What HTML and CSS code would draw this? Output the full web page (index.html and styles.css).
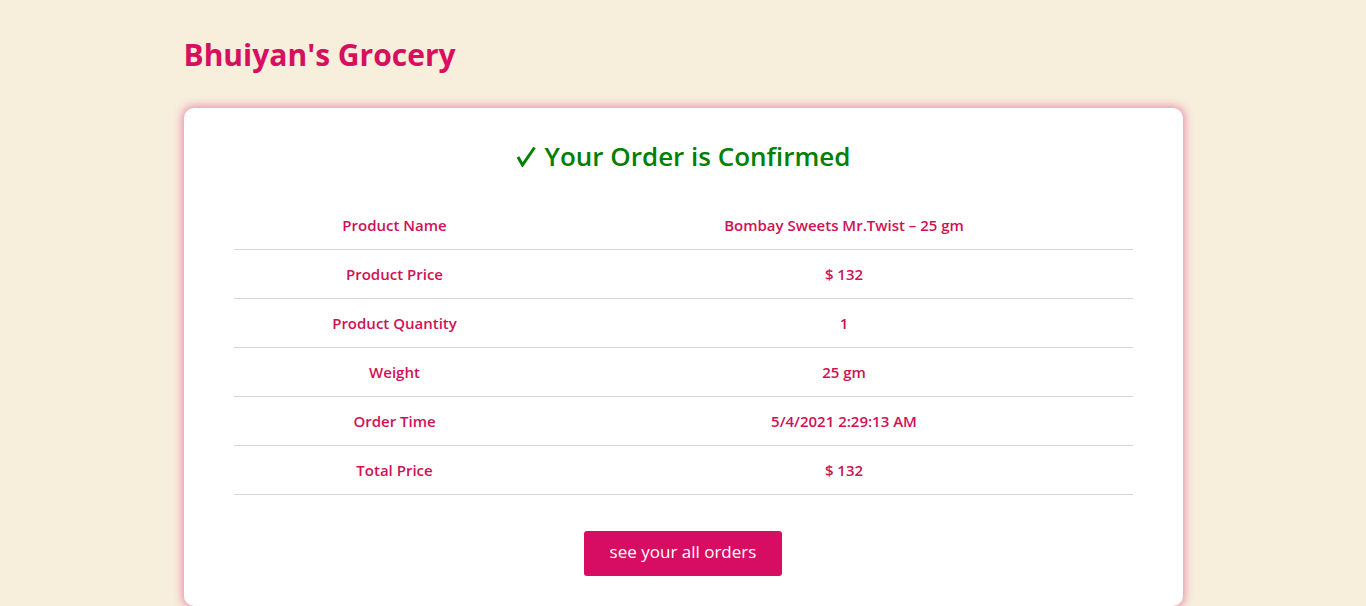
FILE: index.html
```html
<!DOCTYPE html>
<html lang="en">
<head>
<meta charset="utf-8">
<title>Bhuiyan's Grocery</title>
<link rel="stylesheet" href="styles.css">
</head>
<body>
<div class="container">
  <h1 class="brand">Bhuiyan's Grocery</h1>
  <div class="card">
    <h2 class="confirm"><svg class="tick" width="20" height="21" viewBox="0 0 20 21" aria-hidden="true"><path d="M2 11 L6.5 19 L18.5 1.5" fill="none" stroke="#008000" stroke-width="3" stroke-linejoin="miter"/></svg>Your Order is Confirmed</h2>
    <table class="order">
      <tbody>
        <tr><td>Product Name</td><td>Bombay Sweets Mr.Twist – 25 gm</td></tr>
        <tr><td>Product Price</td><td>$ 132</td></tr>
        <tr><td>Product Quantity</td><td>1</td></tr>
        <tr><td>Weight</td><td>25 gm</td></tr>
        <tr><td>Order Time</td><td>5/4/2021 2:29:13 AM</td></tr>
        <tr><td>Total Price</td><td>$ 132</td></tr>
      </tbody>
    </table>
    <div class="actions">
      <button class="btn">see your all orders</button>
    </div>
  </div>
</div>
</body>
</html>
```
FILE: styles.css
```css
html, body {
  margin: 0;
  padding: 0;
  background: #f7eedc;
  font-family: "Open Sans", "Noto Sans", sans-serif;
}
.container {
  width: 999px;
  margin: 0 auto;
  padding-top: 34px;
}
.brand {
  margin: 0 0 32px 0;
  font-size: 30px;
  line-height: 42px;
  font-weight: 700;
  color: #d6105f;
}
.card {
  background: #fff;
  border-radius: 10px;
  box-shadow: 0 0 8px 2px #ec8fae;
  padding: 30px 50px 30px 50px;
}
.confirm {
  margin: 0 0 27px 0;
  display: flex;
  justify-content: center;
  align-items: center;
  gap: 9px;
  font-size: 26px;
  line-height: 36px;
  font-weight: 600;
  color: #008000;
}
.tick {
  display: block;
  margin-top: 1px;
}
.order {
  width: 100%;
  border-collapse: collapse;
}
.order td {
  text-align: center;
  font-size: 15px;
  font-weight: 600;
  color: #cf1157;
  height: 48px;
  padding: 0;
  border-bottom: 1px solid #d5d5d5;
}
.order td:first-child {
  width: 322px;
}
.actions {
  display: flex;
  justify-content: center;
  padding-top: 36px;
}
.btn {
  width: 198px;
  height: 45px;
  border: none;
  border-radius: 3px;
  background: #d60d62;
  color: #fff;
  font-family: "Open Sans", "Noto Sans", sans-serif;
  font-size: 17px;
  line-height: 22px;
  padding: 0 0 3px 0;
  cursor: pointer;
}
```
